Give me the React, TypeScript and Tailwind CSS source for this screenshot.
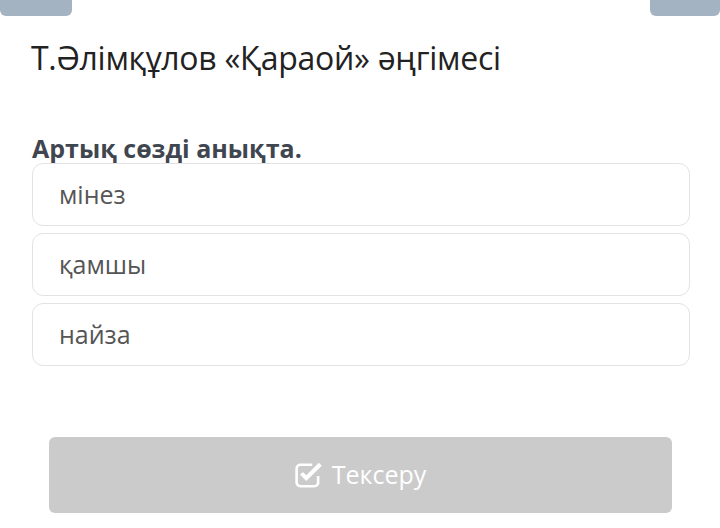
import React from 'react';

const OPTIONS = ['мінез', 'қамшы', 'найза'];

function CheckSquareIcon() {
  return (
    <svg width="28" height="26" viewBox="0 0 26 24" fill="none" className="shrink-0">
      <path d="M16 2.5H5A3.5 3.5 0 0 0 1.5 6v13A3.5 3.5 0 0 0 5 22.5h13a3.5 3.5 0 0 0 3.5-3.5V13" stroke="white" strokeWidth="2.4" />
      <path d="M6 10.5l4.5 4.5 13-13" stroke="white" strokeWidth="3.8" strokeLinejoin="miter" />
    </svg>
  );
}

export default function App() {
  return (
    <div className="w-[720px] h-[528px] bg-white overflow-hidden relative font-['Open_Sans',sans-serif]">
      <div className="flex justify-between">
        <div className="w-[72px] h-[16px] bg-[#a3b3c2] rounded-b-[6px]" />
        <div className="w-[70px] h-[16px] bg-[#a3b3c2] rounded-b-[6px]" />
      </div>

      <h1 className="ml-[31px] mt-[20px] text-[32px] leading-[44px] text-[#222] tracking-[-0.3px]">
        Т.Әлімқұлов «Қараой» әңгімесі
      </h1>

      <p className="ml-[32px] mt-[52px] text-[25px] leading-[32px] font-bold text-[#3f4650]">
        Артық сөзді анықта.
      </p>

      <div className="ml-[32px] w-[658px] mt-[-1px] flex flex-col gap-[7px]">
        {OPTIONS.map((o) => (
          <div key={o} className="h-[63px] border border-[#e3e3e3] rounded-[11px] flex items-center pl-[26px] text-[25px] text-[#555]">
            {o}
          </div>
        ))}
      </div>

      <div className="ml-[49px] mt-[71px] w-[623px] h-[76px] bg-[#cbcbcb] rounded-[6px] flex items-center justify-center gap-[9px] text-white text-[25px]">
        <CheckSquareIcon />
        <span>Тексеру</span>
      </div>
    </div>
  );
}
